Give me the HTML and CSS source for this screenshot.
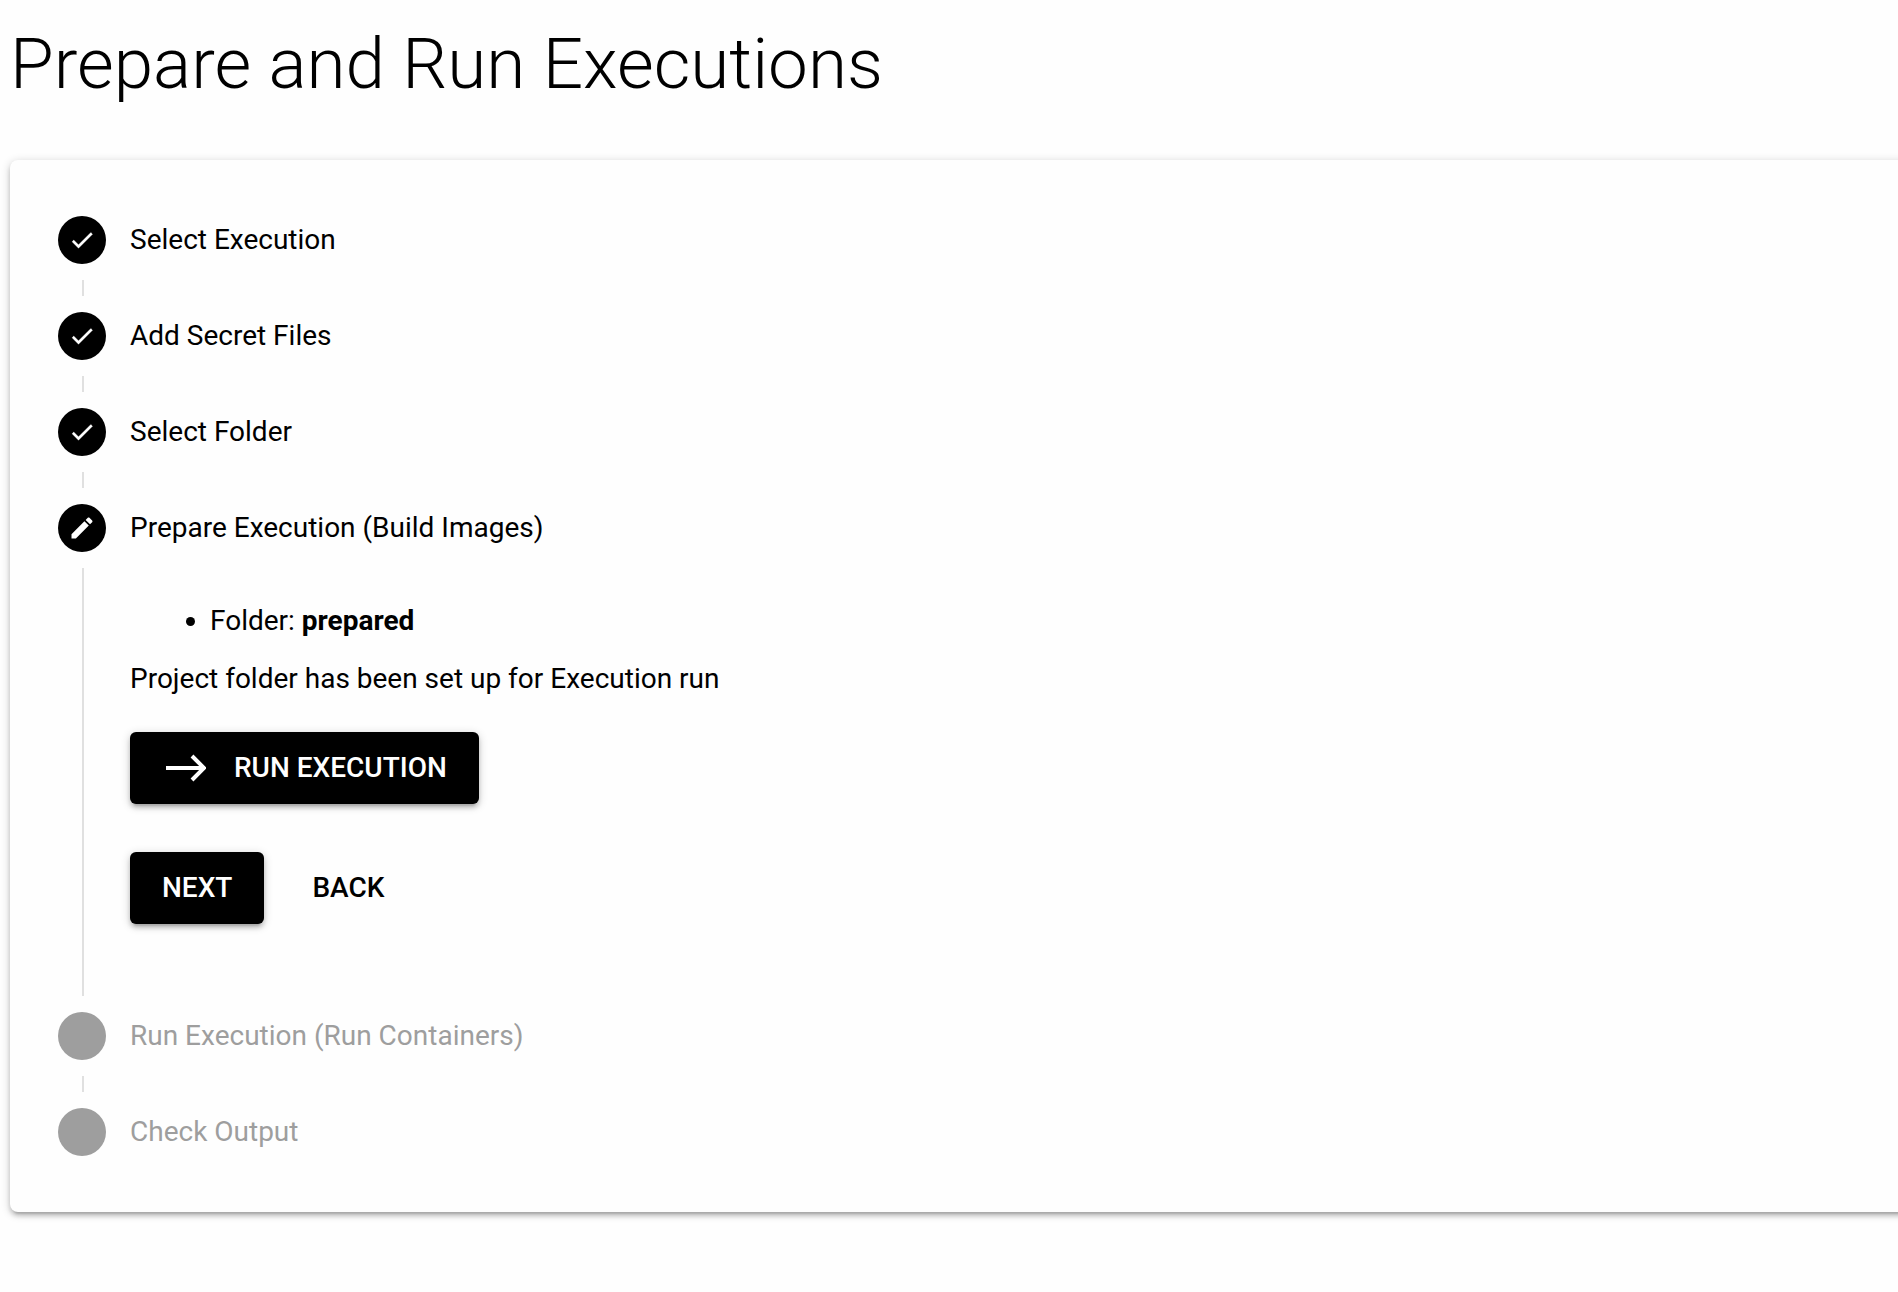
FILE: index.html
```html
<!DOCTYPE html>
<html lang="en">
<head>
<meta charset="utf-8">
<meta name="viewport" content="width=device-width, initial-scale=1">
<title>Prepare and Run Executions</title>
<link rel="stylesheet" href="styles.css">
</head>
<body>
<main class="page">
  <h1 class="page-title">Prepare and Run Executions</h1>
  <section class="card">
    <ol class="stepper">
      <li class="step">
        <div class="step-header">
          <span class="step-icon step-done"><svg viewBox="0 0 24 24" aria-hidden="true"><path d="M21 7 9 19l-5.500-5.500 1.410-1.410L9 16.170 19.590 5.590 21 7z"/></svg></span>
          <span class="step-label">Select Execution</span>
        </div>
        <div class="step-line"></div>
      </li>
      <li class="step">
        <div class="step-header">
          <span class="step-icon step-done"><svg viewBox="0 0 24 24" aria-hidden="true"><path d="M21 7 9 19l-5.500-5.500 1.410-1.410L9 16.170 19.590 5.590 21 7z"/></svg></span>
          <span class="step-label">Add Secret Files</span>
        </div>
        <div class="step-line"></div>
      </li>
      <li class="step">
        <div class="step-header">
          <span class="step-icon step-done"><svg viewBox="0 0 24 24" aria-hidden="true"><path d="M21 7 9 19l-5.500-5.500 1.410-1.410L9 16.170 19.590 5.590 21 7z"/></svg></span>
          <span class="step-label">Select Folder</span>
        </div>
        <div class="step-line"></div>
      </li>
      <li class="step" aria-current="step">
        <div class="step-header">
          <span class="step-icon"><svg viewBox="0 0 24 24" aria-hidden="true"><path d="M20.710 7.040c.39-.39.39-1.040 0-1.410l-2.340-2.340c-.37-.39-1.020-.39-1.410 0l-1.840 1.830 3.750 3.750M3 17.250V21h3.750L17.810 9.930l-3.750-3.750L3 17.250z"/></svg></span>
          <span class="step-label">Prepare Execution (Build Images)</span>
        </div>
        <div class="step-line step-body">
          <ul class="details">
            <li>Folder: <strong>prepared</strong></li>
          </ul>
          <p class="message">Project folder has been set up for Execution run</p>
          <div class="actions">
            <button type="button" class="btn btn-filled btn-icon">
              <svg class="arrow" viewBox="0 0 40 28" aria-hidden="true"><path d="M0 14h37M26 2l12 12-12 12"/></svg>
              <span>RUN EXECUTION</span>
            </button>
          </div>
          <div class="actions">
            <button type="button" class="btn btn-filled">NEXT</button>
            <button type="button" class="btn">BACK</button>
          </div>
        </div>
      </li>
      <li class="step step-pending">
        <div class="step-header">
          <span class="step-icon"></span>
          <span class="step-label">Run Execution (Run Containers)</span>
        </div>
        <div class="step-line"></div>
      </li>
      <li class="step step-pending">
        <div class="step-header">
          <span class="step-icon"></span>
          <span class="step-label">Check Output</span>
        </div>
      </li>
    </ol>
  </section>
</main>
</body>
</html>
```
FILE: styles.css
```css
* {
  box-sizing: border-box;
}

body {
  margin: 0;
  overflow-x: clip;
  background: #fefefe;
  color: #000;
  font-family: Roboto, "Liberation Sans", sans-serif;
  font-size: 28px;
  line-height: 42px;
}

.page {
  padding: 16px 0 48px 10px;
}

.page-title {
  margin: 0 0 48px;
  font-size: 71px;
  font-weight: 300;
  line-height: 96px;
}

/* The card bleeds past the right edge of the window. */
.card {
  margin-right: -16px;
  padding: 56px 64px 56px 48px;
  border-radius: 8px;
  background: #fefefe;
  box-shadow:
    0 2px 10px rgba(0, 0, 0, 0.2),
    0 4px 4px rgba(0, 0, 0, 0.14),
    0 6px 2px -4px rgba(0, 0, 0, 0.12);
}

.stepper {
  margin: 0;
  padding: 0;
  list-style: none;
}

.step-header {
  display: flex;
  align-items: center;
  gap: 24px;
}

.step-icon {
  display: flex;
  flex: none;
  align-items: center;
  justify-content: center;
  width: 48px;
  height: 48px;
  border-radius: 50%;
  background: #000;
}

.step-icon svg {
  width: 28px;
  height: 28px;
  fill: #fff;
}

.step-done svg {
  stroke: #fff;
  stroke-width: 0.3;
}

.step-line {
  min-height: 16px;
  margin: 16px 0 16px 24px;
  border-left: 2px solid #e0e0e0;
}

.step-body {
  padding: 32px 0 72px 46px;
}

.step-pending .step-icon {
  background: #9e9e9e;
}

.step-pending .step-label {
  color: #9e9e9e;
}

.details {
  margin: 0 0 16px;
  padding-left: 80px;
  list-style: disc;
}

.message {
  margin: 0;
}

.actions {
  display: flex;
  gap: 16px;
  margin-top: 32px;
}

.actions + .actions {
  margin-top: 48px;
}

.btn {
  display: flex;
  align-items: center;
  height: 72px;
  padding: 0 32px;
  border: 0;
  border-radius: 6px;
  background: transparent;
  color: #000;
  font: inherit;
  font-weight: 500;
  cursor: pointer;
}

.btn-filled {
  background: #000;
  color: #fff;
  box-shadow:
    0 2px 10px rgba(0, 0, 0, 0.2),
    0 4px 4px rgba(0, 0, 0, 0.14),
    0 6px 2px -4px rgba(0, 0, 0, 0.12);
}

.btn-icon {
  gap: 28px;
  padding-left: 36px;
}

.arrow {
  width: 40px;
  height: 28px;
  fill: none;
  stroke: #fff;
  stroke-width: 4;
}
```
